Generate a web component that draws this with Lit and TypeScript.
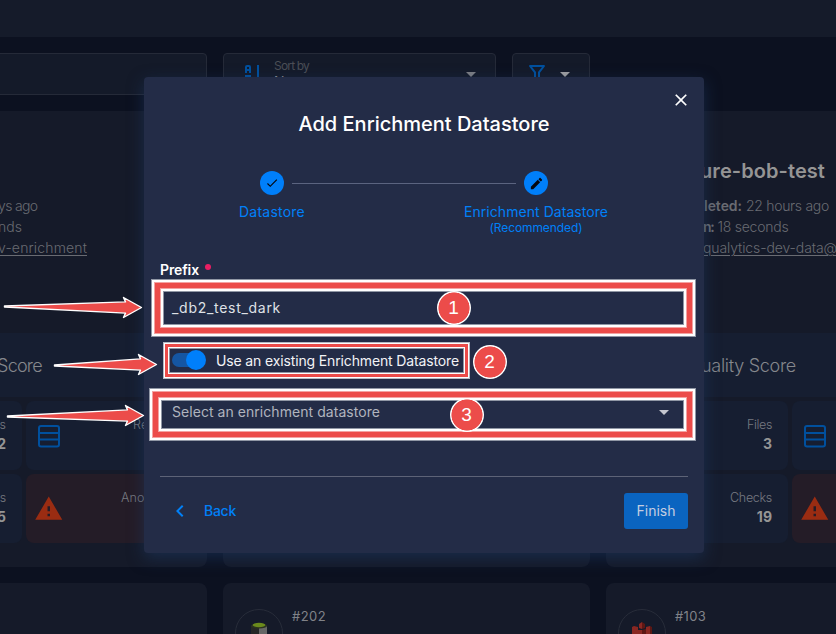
import { LitElement, html, css, svg } from "lit";
import { customElement, property } from "lit/decorators.js";

/* Text run that spreads its letters to fill a given width. */
@customElement("fit-text")
class FitText extends LitElement {
  @property({ type: Number }) w = 0;
  @property() text = "";
  static styles = css`
    :host { display: inline-block; white-space: pre; }
    :host(.ln) span { text-decoration: underline; text-underline-offset: 2px; text-decoration-thickness: 1px; }
  `;
  render() {
    return html`<span>${this.text}</span>`;
  }
  firstUpdated() {
    const s = this.renderRoot.querySelector("span") as HTMLElement;
    const natural = s.getBoundingClientRect().width;
    const gap = (this.w - natural) / Math.max(1, this.text.length);
    s.style.letterSpacing = gap.toFixed(3) + "px";
  }
}

const t = (text: string, w: number) => html`<fit-text .text=${text} .w=${w}></fit-text>`;
const link = (text: string, w: number) => html`<fit-text class="ln" .text=${text} .w=${w}></fit-text>`;

const CARET = "M7,10L12,15L17,10H7Z";
const FILTER =
  "M15,19.88C15.04,20.18 14.94,20.5 14.71,20.71C14.32,21.1 13.69,21.1 13.3,20.71L9.29,16.7C9.06,16.47 8.96,16.16 9,15.87V10.75L4.21,4.62C3.87,4.19 3.95,3.56 4.38,3.22C4.57,3.08 4.78,3 5,3H19C19.22,3 19.43,3.08 19.62,3.22C20.05,3.56 20.13,4.19 19.79,4.62L15,10.75V19.88M7.04,5L11,10.06V15.58L13,17.58V10.05L16.96,5H7.04Z";
const CHECK = "M21,7L9,19L3.5,13.5L4.91,12.09L9,16.17L19.59,5.59L21,7Z";
const PENCIL =
  "M20.71,7.04C21.1,6.65 21.1,6 20.71,5.63L18.37,3.29C18,2.9 17.35,2.9 16.96,3.29L15.12,5.12L18.87,8.87M3,17.25V21H6.75L17.81,9.93L14.06,6.18L3,17.25Z";
const CLOSE =
  "M19,6.41L17.59,5L12,10.59L6.41,5L5,6.41L10.59,12L5,17.59L6.41,19L12,13.41L17.59,19L19,17.59L13.41,12L19,6.41Z";
const CHEVRON = "M15.41,16.58L10.83,12L15.41,7.41L14,6L8,12L14,18L15.41,16.58Z";
const ALERT = "M13,14H11V10H13M13,18H11V16H13M1,21H23L12,2L1,21Z";

const icon = (d: string, size = 24) =>
  html`<svg width=${size} height=${size} viewBox="0 0 24 24"><path fill="currentColor" d=${d} /></svg>`;

const tableIcon = html`<svg class="table-ic" width="24" height="24" viewBox="0 0 24 24" fill="none" stroke="currentColor" stroke-width="2">
  <rect x="2" y="2" width="20" height="20.6" rx="2" /><path d="M2 9H22M2 15.5H22" />
</svg>`;

const arrow = (x0: number, y0: number, x1: number, y1: number) => svg`<path d=${
  `M${x0} ${y0}L${x1 - 16} ${y1 - 5.6}L${x1 - 18} ${y1 - 10}L${x1} ${y1}L${x1 - 18} ${y1 + 10}L${x1 - 16} ${y1 + 5.6}L${x0} ${y0 + 1}Z`
} />`;

@customElement("app-root")
class AppRoot extends LitElement {
  static styles = css`
    :host {
      display: block; position: relative; width: 836px; height: 634px; overflow: hidden;
      background: #0c1120; color: #8d8e91;
      font: 400 14px/20px Inter, "Open Sans", sans-serif;
    }
    * { box-sizing: border-box; }
    svg { display: block; flex: none; }
    .page { display: flex; flex-direction: column; height: 634px; overflow: hidden; }
    .top { height: 37px; background: #151b2a; flex: none; }
    .tools { display: flex; gap: 16px; margin: 16px 0 16px -160px; height: 42px; flex: none; }
    .ctl { border: 1px solid #252a38; border-radius: 4px; background: #141a29; display: flex; }
    .search { width: 367px; flex: none; }
    .sort { width: 273px; flex: none; padding: 8px 12px 0 16px; }
    .sort .words { flex: 1; margin-left: 10px; font-size: 12px; line-height: 8px; color: #4b4e56; }
    .sort .val { font-size: 14px; line-height: 20px; color: #8d8e91; margin-top: 2px; }
    .blue { color: #00509e; }
    .car { color: #7d7e83; }
    .filter { width: 78px; flex: none; padding: 8px 12px; gap: 4px; }
    .filter .car { color: #a0a0a2; }
    .grid { display: grid; grid-template-columns: repeat(3, 367px); grid-template-rows: 456px 200px; gap: 16px; margin-left: -160px; flex: none; }
    .card { background: #151a29; border-radius: 8px; overflow: hidden; }
    .row1 { border-radius: 0 0 8px 8px; }
    .info { height: 222px; display: flex; flex-direction: column; color: #696b72; font-weight: 300; white-space: nowrap; }
    .left .info { padding: 84px 0 0 158px; }
    .right .info { padding: 48px 0 0 94px; }
    .name { font-size: 20px; line-height: 24px; font-weight: 600; color: #959595; margin-bottom: 12px; }
    .line { height: 21px; line-height: 21px; }
    .right .l1 { padding-left: 4px; }
    .right .l2 { padding-left: 3px; }
    .right .l3 { padding-left: 3px; }
    b { font-weight: 600; }
    .band { height: 64px; background: #161e31; display: flex; align-items: center; padding-top: 2px; font-size: 18px; font-weight: 300; color: #85878c; margin-bottom: 4px; }
    .left .band { padding-left: 157px; }
    .right .band { padding-left: 95px; }
    .tiles { display: grid; grid-template-columns: 182px 181px; grid-auto-rows: 69px; gap: 4px; }
    .tile { background: #161e31; border-radius: 8px; display: flex; justify-content: space-between; padding: 14px 16px 0 11px; text-align: right; }
    .tile.two { padding-right: 24px; }
    .tile.bad { background: #241c27; }
    .lab { font-size: 12.5px; font-weight: 300; line-height: 20px; color: #777a81; }
    .num { font-size: 14px; font-weight: 700; line-height: 18px; color: #959595; }
    .table-ic { color: #00509e; margin-top: 9px; }
    .warn { color: #9a2c12; margin: 6px 0 0 -3px; }
    .next { padding: 26px 0 0 12px; display: flex; gap: 9px; font-size: 13px; color: #808288; }
    .next .id { line-height: 15px; }
    .av { width: 48px; height: 48px; border: 1px solid #282d3a; border-radius: 50%; display: flex; justify-content: center; padding-top: 12px; }

    .modal {
      position: absolute; left: 144px; top: 77px; width: 560px; height: 476px; background: #232c47; border-radius: 4px;
      box-shadow: 0 5px 16px rgba(30, 62, 108, 0.5); padding: 10px 16px 0; color: #f2f3f6;
      display: flex; flex-direction: column;
    }
    .x { align-self: flex-end; margin-right: -6px; color: #fff; height: 20px; padding: 3px; }
    h1 { margin: 4px 0 0; font-size: 20px; line-height: 26px; font-weight: 500; color: #fff; text-align: center; }
    .steps { display: grid; grid-template-columns: 264px 264px; margin: 34px 0 0 -20px; height: 84px; position: relative; }
    .step { display: flex; flex-direction: column; align-items: center; color: #0080f8; line-height: 18px; }
    .dot { width: 24px; height: 24px; border-radius: 50%; background: #007ffa; color: #04070f; display: flex; align-items: center; justify-content: center; margin-bottom: 8px; }
    .step small { font-size: 12px; line-height: 12px; margin-top: 1px; }
    .rail { position: absolute; left: 152px; top: 12px; width: 224px; height: 1px; background: #5b6480; }
    .prefix { display: flex; font-weight: 600; color: #fff; height: 20px; margin-top: 5px; gap: 6px; }
    .req { width: 6px; height: 6px; border-radius: 50%; background: #e91e63; margin-top: 4px; }
    .field { height: 36px; margin-top: 10px; padding: 0 12px; display: flex; align-items: center; color: #dfe1e6; }
    .sw { display: flex; align-items: center; height: 24px; margin: 23px 0 0 12px; gap: 10px; color: #f2f3f6; }
    .track { width: 28px; height: 14px; border-radius: 7px; background: #1556a3; margin: -2px 6px 0 0; display: flex; align-items: center; }
    .knob { width: 20px; height: 20px; border-radius: 50%; background: #007ffa; margin-left: 14px; flex: none; }
    .select { height: 30px; margin-top: 24px; padding: 0 12px; display: flex; align-items: center; justify-content: space-between; color: #b0b4be; }
    .select svg { color: #c5c7d0; }
    .foot { margin-top: 49px; border-top: 1px solid #5d6377; padding-top: 16px; display: flex; justify-content: space-between; align-items: center; }
    .back { display: flex; align-items: center; color: #0080f8; margin-left: 8px; gap: 12px; font-weight: 500; }
    .fin { width: 64px; height: 36px; border-radius: 3px; background: #0a64c0; color: #c3cde0; display: flex; align-items: center; justify-content: center; }

    .ring {
      position: absolute;
      box-shadow: inset 0 0 0 1px #9097a5, inset 0 0 0 3px #fff, inset 0 0 0 4px #f4a3a2, inset 0 0 0 9px #ec4c4a,
        inset 0 0 0 10px #f4a3a2, inset 0 0 0 12px #fff, inset 0 0 0 13px #9097a5;
    }
    .r1 { left: 151px; top: 279px; width: 545px; height: 58px; }
    .r3 { left: 149px; top: 388px; width: 547px; height: 53px; }
    .r2 {
      left: 163px; top: 342px; width: 307px; height: 37px;
      box-shadow: inset 0 0 0 1px #b4b9c3, inset 0 0 0 2px #fff, inset 0 0 0 5px #ec4c4a, inset 0 0 0 6px #fff, inset 0 0 0 7px #9097a5;
    }
    .badge {
      position: absolute; width: 34px; height: 34px; border-radius: 50%; background: #fff; color: #fff;
      display: flex; align-items: center; justify-content: center; font: 19px/20px "Liberation Sans", Arial, sans-serif;
      background: radial-gradient(circle, #ec4c4a 15.2px, #fff 15.9px);
    }
    .b1 { left: 436.5px; top: 290.5px; }
    .b2 { left: 472.5px; top: 344.5px; }
    .b3 { left: 449.5px; top: 397.5px; }
    .arrows { position: absolute; left: 0; top: 0; fill: #ec4c4a; stroke: #fff; stroke-width: 1.4; stroke-linejoin: round; }
  `;

  tile(label: string, value: string, w: number) {
    return html`<div class="tile"><span></span><div><div class="lab">${t(label, w)}</div><div class="num">${value}</div></div></div>`;
  }

  tiles(a: string, av: string, aw: number, b: string, bv: string, bw: number) {
    return html`<div class="tiles">
      ${this.tile(a, av, aw)}
      <div class="tile two">${tableIcon}<div class="lab">${t("Records", 50)}</div></div>
      ${this.tile(b, bv, bw)}
      <div class="tile two bad"><div class="warn">${icon(ALERT, 29.5)}</div><div class="lab">${t("Anomalies", 62)}</div></div>
    </div>`;
  }

  render() {
    return html`
      <div class="page">
        <div class="top"></div>
        <div class="tools">
          <div class="ctl search"></div>
          <div class="ctl sort">
            <svg class="blue" width="24" height="24" viewBox="0 0 24 24" fill="currentColor">
              <path fill-rule="evenodd" d="M5 11V5Q5 3 7 3H9Q11 3 11 5V11H9V9H7V11ZM7 5V7H9V5ZM5 13H11V15L8 19H11V21H5V19L8 15H5ZM17 3H19V21H17Z" />
            </svg>
            <div class="words">${t("Sort by", 35)}<div class="val">None</div></div>
            <div class="car">${icon(CARET)}</div>
          </div>
          <div class="ctl filter"><div class="blue">${icon(FILTER)}</div><div class="car">${icon(CARET)}</div></div>
        </div>
        <div class="grid">
          <div class="card row1 left">
            <div class="info">
              <div class="line">${t("ys ago", 39.5)}</div>
              <div class="line">${t("nds", 24)}</div>
              <div class="line">${link("v-enrichment", 89)}</div>
            </div>
            <div class="band">${t("Score", 45)}</div>
            ${this.tiles("Tables", "2", 38, "Checks", "5", 42)}
          </div>
          <div class="card row1"></div>
          <div class="card row1 right">
            <div class="info">
              <div class="name">${t("ure-bob-test", 125)}</div>
              <div class="line l1"><b>${t("leted:", 38)}</b> ${t("22 hours ago", 83)}</div>
              <div class="line l2"><b>${t("n:", 10.5)}</b> ${t("18 seconds", 71)}</div>
              <div class="line l3">${link("qualytics-dev-data@", 134)}</div>
            </div>
            <div class="band">${t("uality Score", 95)}</div>
            ${this.tiles("Files", "3", 25, "Checks", "19", 42)}
          </div>
          <div class="card"></div>
          <div class="card next">
            <div class="av">
              <svg width="18" height="22" viewBox="0 0 18 22">
                <path fill="#262626" d="M1 4H9V22H1Z" /><path fill="#666" d="M9 4H17V22H9Z" />
                <ellipse cx="9" cy="4" rx="8" ry="2.6" fill="#2b3320" /><ellipse cx="9" cy="3" rx="6.4" ry="2.2" fill="#6b8a1c" />
              </svg>
            </div>
            <div class="id">${t("#202", 34)}</div>
          </div>
          <div class="card next">
            <div class="av">
              <svg width="20" height="24" viewBox="0 0 20 24">
                <path fill="#8a2722" d="M0 5L2 4V22H0ZM2 4L6 5V22H2ZM7 2L10 0V7L7 6ZM6 8H10V22H6ZM14 5L18 4V22H14Z" />
                <path fill="#5c1714" d="M10 0L13 2V6L10 7ZM10 8L14 7V13H10ZM11 14H14V22H11ZM18 4L20 5V22H18Z" />
              </svg>
            </div>
            <div class="id">${t("#103", 31)}</div>
          </div>
        </div>
      </div>

      <div class="modal">
        <div class="x">${icon(CLOSE, 20)}</div>
        <h1>${t("Add Enrichment Datastore", 251)}</h1>
        <div class="steps">
          <div class="step"><div class="dot">${icon(CHECK, 14)}</div>${t("Datastore", 66)}</div>
          <div class="step"><div class="dot">${icon(PENCIL, 15)}</div>${t("Enrichment Datastore", 144)}<small>${t("(Recommended)", 93)}</small></div>
          <div class="rail"></div>
        </div>
        <div class="prefix">${t("Prefix", 39)}<div class="req"></div></div>
        <div class="field">${t("_db2_test_dark", 109)}</div>
        <div class="sw"><div class="track"><div class="knob"></div></div>${t("Use an existing Enrichment Datastore", 243)}</div>
        <div class="select">${t("Select an enrichment datastore", 208)}${icon(CARET)}</div>
        <div class="foot">
          <div class="back">${icon(CHEVRON, 24)}${t("Back", 32)}</div>
          <div class="fin">${t("Finish", 39)}</div>
        </div>
      </div>

      <div class="ring r1"></div>
      <div class="ring r2"></div>
      <div class="ring r3"></div>
      <div class="badge b1">1</div>
      <div class="badge b2">2</div>
      <div class="badge b3">3</div>
      <svg class="arrows" width="836" height="634">
        ${arrow(4.5, 306, 141.5, 307.5)}${arrow(54.5, 365, 156.5, 364.5)}${arrow(7.5, 416, 143.5, 415.5)}
      </svg>
    `;
  }
}
